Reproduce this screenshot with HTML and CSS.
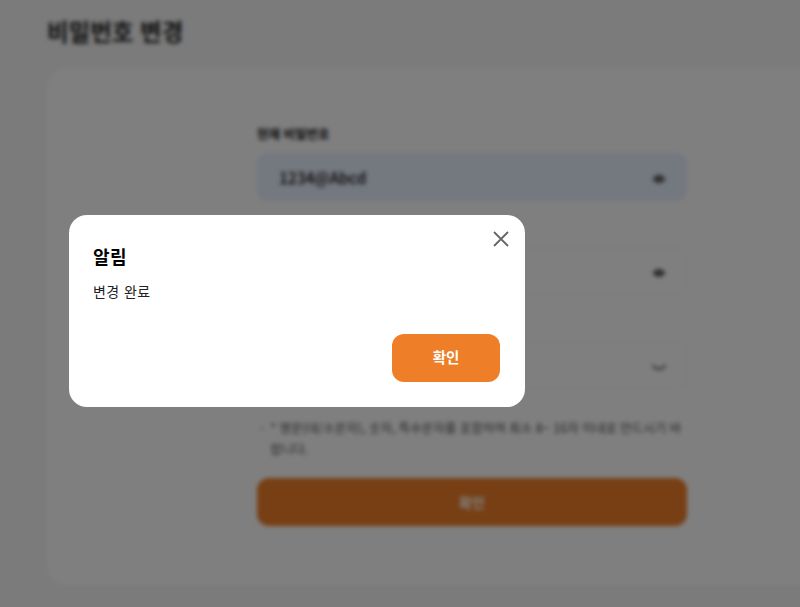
FILE: index.html
```html
<!DOCTYPE html>
<html lang="ko">
<head>
    <meta charset="UTF-8">
    <meta name="viewport" content="width=device-width, initial-scale=1.0">
    <title>비밀번호 변경</title>
    <link rel="stylesheet" href="styles.css">
</head>
<body>
    <div class="page">
        <h1 class="page-title">비밀번호 변경</h1>
        <div class="card">
            <form class="form">
                <div class="field">
                    <label class="field-label">현재 비밀번호</label>
                    <div class="input-box filled">
                        <span class="input-value">1234@Abcd</span>
                        <svg class="input-icon" viewBox="0 0 16 16"><path d="M1.500 8c2-2.600 4.100-4 6.500-4s4.500 1.400 6.500 4c-2 2.600-4.100 4-6.500 4s-4.500-1.400-6.500-4z" fill="#555"/><circle cx="8" cy="8" r="1.200" fill="#888"/></svg>
                    </div>
                </div>
                <div class="field">
                    <label class="field-label">새 비밀번호</label>
                    <div class="input-box">
                        <svg class="input-icon" viewBox="0 0 16 16"><path d="M1.500 8c2-2.600 4.100-4 6.500-4s4.500 1.400 6.500 4c-2 2.600-4.100 4-6.500 4s-4.500-1.400-6.500-4z" fill="#555"/><circle cx="8" cy="8" r="1.200" fill="#888"/></svg>
                    </div>
                </div>
                <div class="field">
                    <label class="field-label">새 비밀번호 확인</label>
                    <div class="input-box">
                        <svg class="input-icon" viewBox="0 0 16 16"><path d="M2 6.500c1.500 2.400 3.500 3.500 6 3.500s4.500-1.100 6-3.500" fill="none" stroke="#555" stroke-width="1.800" stroke-linecap="round"/></svg>
                    </div>
                </div>
                <div class="hint">
                    <span class="hint-dash">-</span>
                    <p class="hint-text">* 영문(대/소문자), 숫자, 특수문자를 포함하여 최소 8~ 16자 이내로 만드시기 바랍니다.</p>
                </div>
                <a href="#" class="submit-button">확인</a>
            </form>
        </div>
    </div>

    <div class="overlay">
        <div class="modal">
            <button class="modal-close" type="button" aria-label="닫기">
                <svg viewBox="0 0 18 18"><path d="M2 2l14 14M16 2L2 16" fill="none" stroke="#666" stroke-width="1.800"/></svg>
            </button>
            <h2 class="modal-title">알림</h2>
            <p class="modal-text">변경 완료</p>
            <div class="modal-actions">
                <a href="#" class="modal-button">확인</a>
            </div>
        </div>
    </div>
</body>
</html>
```

FILE: styles.css
```css
html, body {
    height: 100%;
    overflow: hidden;
}
body {
    margin: 0;
    background-color: #f6f6f6;
    font-family: 'Noto Sans CJK KR', 'Noto Sans', sans-serif;
    color: #111;
}
.page {
    padding: 14px 0 0 47px;
}
.page-title {
    margin: 0 0 19px;
    font-size: 23.5px;
    line-height: 35px;
    font-weight: 700;
    color: #222;
}
/* the card runs off the right side of the window */
.card {
    height: 517px;
    padding: 57px 0 0 210px;
    box-sizing: border-box;
    background-color: white;
    border-radius: 20px 0 0 20px;
}
.form {
    width: 430px;
}
.field {
    margin-bottom: 18px;
}
.field-label {
    display: block;
    height: 18px;
    margin-bottom: 10px;
    font-size: 12.5px;
    line-height: 18px;
    font-weight: 700;
}
.input-box {
    display: flex;
    align-items: center;
    height: 48px;
    padding: 0 19px 0 21px;
    box-sizing: border-box;
    border: 1px solid #ececec;
    border-radius: 10px;
}
.input-box.filled {
    background-color: #e8f0fe;
    border-color: #e8f0fe;
}
.input-value {
    font-size: 15.5px;
    font-weight: 500;
}
.input-icon {
    width: 16px;
    height: 16px;
    margin: 3px 0 0 auto;
}
.hint {
    display: flex;
    gap: 6px;
    margin: 28px 0 19px;
    padding-left: 3px;
    color: #555;
}
.hint-dash {
    font-size: 12px;
    line-height: 21px;
}
.hint-text {
    margin: 0;
    font-size: 12.5px;
    line-height: 21px;
}
.submit-button {
    display: block;
    height: 48px;
    background-color: #ee7e27;
    color: white;
    text-decoration: none;
    text-align: center;
    border-radius: 12px;
    font-size: 14px;
    font-weight: 700;
    line-height: 48px;
}
.overlay {
    position: fixed;
    inset: 0;
    background-color: rgba(0, 0, 0, 0.5);
    backdrop-filter: blur(2px);
}
.modal {
    position: absolute;
    left: 69px;
    top: 215px;
    width: 456px;
    height: 192px;
    padding: 24px 25px 25px 24px;
    box-sizing: border-box;
    background-color: white;
    border-radius: 18px;
    display: flex;
    flex-direction: column;
}
.modal-close {
    position: absolute;
    top: 15px;
    right: 15px;
    width: 18px;
    height: 18px;
    padding: 0;
    border: none;
    background: none;
}
.modal-close svg {
    display: block;
}
.modal-title {
    margin: 0;
    font-size: 18px;
    line-height: 34px;
    font-weight: 700;
    letter-spacing: 0.4px;
    color: black;
}
.modal-text {
    margin: 8px 0 0;
    font-size: 14px;
    line-height: 20px;
    letter-spacing: 0.4px;
    color: #222;
}
.modal-actions {
    display: flex;
    justify-content: flex-end;
    margin-top: auto;
}
.modal-button {
    display: block;
    width: 108px;
    height: 48px;
    background-color: #ee7e27;
    color: white;
    text-decoration: none;
    text-align: center;
    border-radius: 12px;
    font-size: 14.5px;
    font-weight: 700;
    line-height: 46px;
}
```
